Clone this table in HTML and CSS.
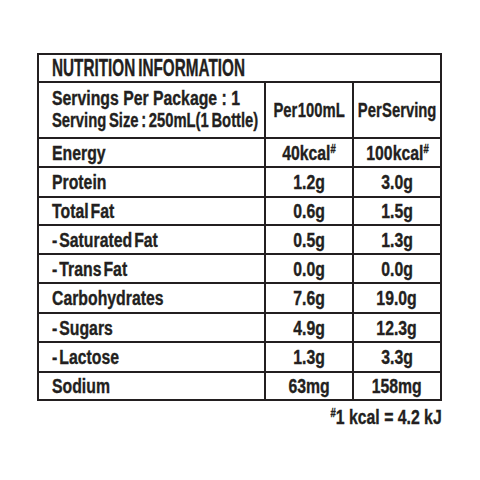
FILE: index.html
```html
<!DOCTYPE html>
<html>
<head>
<meta charset="utf-8">
<link rel="stylesheet" href="styles.css">
</head>
<body>
<div class="panel">
  <table class="nutri">
    <colgroup><col class="c-label"><col class="c-val"><col class="c-val"></colgroup>
    <tr class="r-title"><td colspan="3" class="title"><span class="t tt">NUTRITION INFORMATION</span></td></tr>
    <tr class="r-head">
      <td class="label"><span class="t tl l1">Servings Per Package : 1</span><br><span class="t tl l2">Serving Size : 250mL(1 Bottle)</span></td>
      <td class="val"><span class="t tc th">Per 100mL</span></td>
      <td class="val"><span class="t tc th">Per Serving</span></td>
    </tr>
    <tr class="r29"><td class="label"><span class="t tl">Energy</span></td><td class="val"><span class="t tc">40kcal<sup>#</sup></span></td><td class="val"><span class="t tc">100kcal<sup>#</sup></span></td></tr>
    <tr class="r30"><td class="label"><span class="t tl">Protein</span></td><td class="val"><span class="t tc">1.2g</span></td><td class="val"><span class="t tc">3.0g</span></td></tr>
    <tr class="r28"><td class="label"><span class="t tl">Total Fat</span></td><td class="val"><span class="t tc">0.6g</span></td><td class="val"><span class="t tc">1.5g</span></td></tr>
    <tr class="r29"><td class="label"><span class="t tl">- Saturated Fat</span></td><td class="val"><span class="t tc">0.5g</span></td><td class="val"><span class="t tc">1.3g</span></td></tr>
    <tr class="r29"><td class="label"><span class="t tl">- Trans Fat</span></td><td class="val"><span class="t tc">0.0g</span></td><td class="val"><span class="t tc">0.0g</span></td></tr>
    <tr class="r30"><td class="label"><span class="t tl">Carbohydrates</span></td><td class="val"><span class="t tc">7.6g</span></td><td class="val"><span class="t tc">19.0g</span></td></tr>
    <tr class="r29"><td class="label"><span class="t tl">- Sugars</span></td><td class="val"><span class="t tc">4.9g</span></td><td class="val"><span class="t tc">12.3g</span></td></tr>
    <tr class="r30"><td class="label"><span class="t tl">- Lactose</span></td><td class="val"><span class="t tc">1.3g</span></td><td class="val"><span class="t tc">3.3g</span></td></tr>
    <tr class="r28"><td class="label"><span class="t tl">Sodium</span></td><td class="val"><span class="t tc">63mg</span></td><td class="val"><span class="t tc">158mg</span></td></tr>
  </table>
  <p class="foot"><span class="t tr tf"><sup>#</sup>1 kcal = 4.2 kJ</span></p>
</div>
</body>
</html>
```
FILE: styles.css
```css
html, body {
  margin: 0;
  padding: 0;
  background: #ffffff;
}
body {
  width: 480px;
  height: 480px;
  font-family: "Liberation Sans", Arial, sans-serif;
  font-weight: bold;
  color: #231f20;
  -webkit-text-stroke: 0.35px #231f20;
}
.panel {
  padding: 53px 0 0 37px;
  width: 405px;
}
.nutri {
  border-collapse: collapse;
  width: 405px;
  table-layout: fixed;
  border: 2px solid #231f20;
}
.c-label { width: 227px; }
.c-val { width: 88px; }
.nutri td {
  border: 2px solid #231f20;
  padding: 0;
  font-size: 20px;
  line-height: 22px;
  vertical-align: middle;
  white-space: nowrap;
  overflow: visible;
}
.nutri td.label { padding-left: 13px; }
.nutri td.val { text-align: center; }
.nutri td.title { padding-left: 13px; font-size: 23px; line-height: 24px; }
.r-title { height: 28px; }
.r-head { height: 56px; }
.r28 { height: 28px; }
.r29 { height: 29px; }
.r30 { height: 30px; }
.t {
  display: inline-block;
  white-space: nowrap;
  word-spacing: -3px;
  transform: scaleX(0.79);
}
.tl { transform-origin: left center; }
.tc { transform-origin: center center; }
.tr { transform-origin: right center; }
.tt { transform: scaleX(0.665); transform-origin: left center; word-spacing: -2px; }
.th { transform: scaleX(0.74); word-spacing: -5px; margin: 0 -20px; }
.l1 { word-spacing: 0; }
.l2 { transform: scaleX(0.74); word-spacing: -2px; }
.r-head .label .t { line-height: 21px; }
.r-head .label { padding-bottom: 3px; }
sup {
  font-size: 12px;
  vertical-align: top;
  line-height: 12px;
  position: relative;
  top: 1px;
}
.foot {
  margin: 5px 0 0 0;
  text-align: right;
  font-size: 20px;
  line-height: 22px;
}
.tf { word-spacing: 0; }
```
